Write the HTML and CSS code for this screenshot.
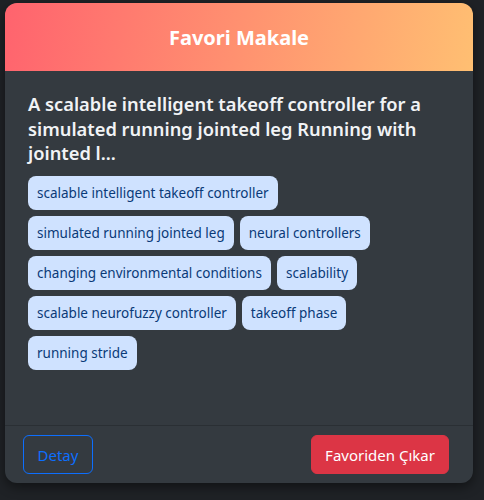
FILE: index.html
```html
<!DOCTYPE html>
<html lang="tr">
<head>
<meta charset="utf-8">
<title>Favori Makale</title>
<link rel="stylesheet" href="styles.css">
</head>
<body>
<div class="card">
  <div class="card-header">Favori Makale</div>
  <div class="card-body">
    <h5 class="card-title">A scalable intelligent takeoff controller for a simulated running jointed leg Running with jointed l...</h5>
    <div class="tags">
      <span class="tag">scalable intelligent takeoff controller</span>
      <span class="tag">simulated running jointed leg</span>
      <span class="tag">neural controllers</span>
      <span class="tag">changing environmental conditions</span>
      <span class="tag">scalability</span>
      <span class="tag">scalable neurofuzzy controller</span>
      <span class="tag">takeoff phase</span>
      <span class="tag">running stride</span>
    </div>
  </div>
  <div class="card-footer">
    <button class="btn btn-outline">Detay</button>
    <button class="btn btn-danger">Favoriden Çıkar</button>
  </div>
</div>
</body>
</html>
```
FILE: styles.css
```css
html, body {
  margin: 0;
  padding: 0;
  background: #1f2226;
  height: 100%;
}
body {
  font-family: "Noto Sans", "Open Sans", sans-serif;
  padding: 3px 11px 0 5px;
  box-sizing: border-box;
}
.card {
  width: 468px;
  height: 480px;
  background: #343a40;
  border-radius: 12px;
  overflow: hidden;
  display: flex;
  flex-direction: column;
  box-shadow: 0 4px 12px rgba(0,0,0,0.45);
}
.card-header {
  height: 68px;
  flex: none;
  background: linear-gradient(100deg, #ff636e 0%, #ffbf72 100%);
  color: #fff;
  font-size: 20px;
  font-weight: 700;
  display: flex;
  align-items: center;
  justify-content: center;
}
.card-body {
  flex: 1;
  padding: 21px 23px 0 23px;
}
.card-title {
  margin: 0 0 10px 0;
  color: #f1f3f5;
  font-size: 18.3px;
  font-weight: 600;
  line-height: 24.5px;
}
.tags {
  display: flex;
  flex-wrap: wrap;
  gap: 6px;
}
.tag {
  background: #cfe2ff;
  color: #0a3a78;
  font-size: 13.5px;
  line-height: 22px;
  padding: 6px 9px;
  border-radius: 8px;
}
.card-footer {
  flex: none;
  border-top: 1px solid #2a2f34;
  padding: 9px 24px 9px 18px;
  display: flex;
  justify-content: space-between;
  align-items: center;
}
.btn {
  font-family: inherit;
  font-size: 15px;
  height: 39px;
  padding: 0 12px;
  border-radius: 6px;
  cursor: pointer;
}
.btn-outline {
  width: 70px;
  background: transparent;
  border: 1px solid #0d6efd;
  color: #0d6efd;
}
.btn-danger {
  width: 138px;
  background: #dc3545;
  border: 1px solid #dc3545;
  color: #fff;
}
```
